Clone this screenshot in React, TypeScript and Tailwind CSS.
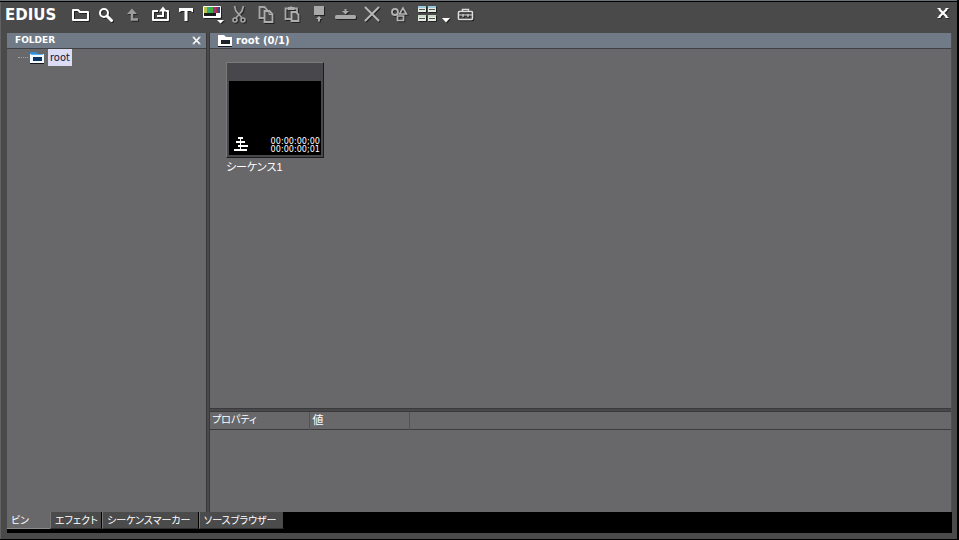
import type { ReactNode } from "react";

const shadow = "drop-shadow-[1px_1px_0px_#222222]";
const jp = "font-['Liberation_Sans','Noto_Sans_CJK_JP',sans-serif] [font-feature-settings:'palt']";

function Icon({ children, w = 26 }: { children: ReactNode; w?: number }) {
  return (
    <svg width={w} height={26} viewBox={`0 0 ${w} 26`} fill="none" className={`block shrink-0 ${shadow}`} aria-hidden="true">
      {children}
    </svg>
  );
}

function Tool({ label, width, children }: { label: string; width: string; children: ReactNode }) {
  return (
    <button type="button" aria-label={label} className={`h-[26px] shrink-0 overflow-visible ${width}`}>
      <Icon>{children}</Icon>
    </button>
  );
}

function CloseIcon({ className }: { className: string }) {
  return (
    <svg viewBox="0 0 12 12" className={`block ${className}`} fill="none" aria-hidden="true">
      <path d="M2 2L10 10M10 2L2 10" stroke="#fff" strokeWidth="2.200" />
      <path d="M0.500 1.500H3.500M8.500 1.500H11.500M0.500 10.500H3.500M8.500 10.500H11.500" stroke="#fff" strokeWidth="1" />
    </svg>
  );
}

function FolderIcon({ glow = false }: { glow?: boolean }) {
  return (
    <svg width="14" height="12" viewBox="0 0 14 12" className="block shrink-0" aria-hidden="true">
      <path d="M0 1H6L8 3H14V12H0Z" fill="#15181c" />
      <path d="M0 0H6L8 2H14V11H0Z" fill={glow ? "#2f8edc" : "#ffffff"} />
      <path d="M0 2H14V11H0Z" fill={glow ? "#f2faff" : "#ffffff"} />
      {glow && <path d="M1 2H13V3H1Z" fill="#5fb0ee" />}
      <path d="M3 5H12V9H3Z" fill={glow ? "#0a3568" : "#20242a"} />
    </svg>
  );
}

function Toolbar() {
  return (
    <header className="flex h-[30px] shrink-0 items-start">
      <h1 className="w-[66px] shrink-0 pl-1 font-['DejaVu_Sans'] text-[15px] leading-[24px] font-bold text-white">EDIUS</h1>
      <Tool label="新規フォルダ" width="w-[26px]">
        <path d="M6 17V7H11L13 9H21V17Z" stroke="#fff" strokeWidth="2" strokeLinejoin="round" />
      </Tool>
      <Tool label="検索" width="w-[26px]">
        <circle cx="11" cy="10" r="4" stroke="#fff" strokeWidth="2" />
        <path d="M14 13L18.500 17.500" stroke="#fff" strokeWidth="3" strokeLinecap="round" />
      </Tool>
      <Tool label="上へ" width="w-[27px]">
        <path d="M8 11L13 5.500L18 11Z" fill="#9c9c9c" />
        <path d="M13 10V16.500H19" stroke="#9c9c9c" strokeWidth="2.500" />
      </Tool>
      <Tool label="ファイルの追加" width="w-[27px]">
        <path d="M12 8H7V17H22V8H20" stroke="#fff" strokeWidth="2" strokeLinejoin="round" />
        <path d="M11 13H17V8" stroke="#fff" strokeWidth="2" />
        <path d="M13 8.500L17 3.500L21 8.500Z" fill="#fff" />
      </Tool>
      <Tool label="タイトルの追加" width="w-[26px]">
        <path d="M6 5H20V9H18.500V8H14.500V18H11.500V8H7.500V9H6Z" fill="#fff" />
      </Tool>
      <Tool label="新規クリップの作成" width="w-[27px]">
        <rect x="4" y="3" width="18" height="12" rx="1" fill="#fff" />
        <rect x="5" y="4" width="3" height="6" fill="#b9c34a" />
        <rect x="8" y="4" width="3" height="6" fill="#30a987" />
        <rect x="11" y="4" width="3" height="6" fill="#42ad38" />
        <rect x="14" y="4" width="3" height="6" fill="#9a368e" />
        <rect x="17" y="4" width="2" height="6" fill="#a63138" />
        <rect x="19" y="4" width="2" height="6" fill="#3c4088" />
        <rect x="5" y="10" width="12" height="3" fill="#1c1c1c" />
        <path d="M18 17H25L21.500 20.500Z" fill="#fff" />
      </Tool>
      <Tool label="切り取り" width="w-[26px]">
        <path d="M8.500 3L10 8L16 15M17.500 3L16 8L10 15" stroke="#a2a2a2" strokeWidth="1.800" />
        <circle cx="9" cy="17" r="2" stroke="#a6a6a6" strokeWidth="1.600" />
        <circle cx="17" cy="17" r="2" stroke="#a6a6a6" strokeWidth="1.600" />
      </Tool>
      <Tool label="コピー" width="w-[27px]">
        <path d="M7.500 4H12.500L15 6.500V15H7.500Z" stroke="#a6a6a6" strokeWidth="1.800" fill="#4a4a4a" />
        <path d="M12.500 8H17.500L20.500 11V19H12.500Z" stroke="#aeaeae" strokeWidth="1.800" fill="#4a4a4a" />
        <path d="M17 8V11.500H20" stroke="#aeaeae" strokeWidth="1" />
      </Tool>
      <Tool label="貼り付け" width="w-[27px]">
        <path d="M6.500 5.500H18V16H6.500Z" stroke="#a6a6a6" strokeWidth="1.800" />
        <path d="M9 4H11L12 3L13 4H15.500V7H9Z" fill="#aeaeae" />
        <path d="M12.500 9H17L19.500 11.500V18H12.500Z" stroke="#aeaeae" strokeWidth="1.800" fill="#4a4a4a" />
      </Tool>
      <Tool label="プレーヤーで表示" width="w-[26px]">
        <rect x="8" y="3" width="10" height="9" fill="#a8a8a8" />
        <path d="M10 16L13 13L16 16H14V18.500H12V16Z" fill="#b0b0b0" />
      </Tool>
      <Tool label="タイムラインへ配置" width="w-[26px]">
        <rect x="3" y="12" width="21" height="4" rx="1.500" fill="#a8a8a8" />
        <path d="M12.500 6H14.500V8H17L13.500 11.500L10 8H12.500Z" fill="#a8a8a8" />
      </Tool>
      <Tool label="削除" width="w-[27px]">
        <path d="M7.500 4.500L20.500 17.500M20.500 4.500L7.500 17.500" stroke="#b8b8b8" strokeWidth="2" strokeLinecap="round" />
      </Tool>
      <Tool label="プロパティ" width="w-[27px]">
        <circle cx="10" cy="9" r="3" stroke="#b4b4b4" strokeWidth="1.800" />
        <path d="M18 5L21.500 11H14.500Z" stroke="#b4b4b4" strokeWidth="1.600" />
        <path d="M12.500 13V17.500H18.500V13Z" stroke="#b4b4b4" strokeWidth="1.700" />
      </Tool>
      <Tool label="表示" width="w-[26px]">
        {[3, 12].map((y) =>
          [6, 16].map((x) => (
            <g key={`${x}-${y}`}>
              <rect x={x} y={y} width="8" height="6" fill="#e2eae4" />
              <rect x={x} y={y} width="8" height="2" fill={y === 3 ? "#9ac9dc" : "#ccdcc8"} />
              <rect x={x + 1} y={y + 3} width="6" height="1" fill="#565348" />
            </g>
          )),
        )}
      </Tool>
      <button type="button" aria-label="表示の切り替え" className="h-[26px] w-4">
        <Icon w={16}>
          <path d="M4 15H12L8 19.500Z" fill="#fff" />
        </Icon>
      </button>
      <Tool label="ツール" width="w-[26px]">
        <path d="M8.500 8.500V6.500H14.500V8.500" stroke="#ddd" strokeWidth="1.500" />
        <rect x="4.500" y="8.500" width="14" height="8" rx="1" stroke="#ddd" strokeWidth="1.600" />
        <path d="M5 12H18M9 11V14M14 11V14" stroke="#d5d5d5" strokeWidth="1.200" />
      </Tool>
      <button type="button" aria-label="閉じる" className="mt-1 mr-[8px] ml-auto">
        <CloseIcon className={`h-[12px] w-[12px] ${shadow}`} />
      </button>
    </header>
  );
}

function PanelHeader({ children }: { children: ReactNode }) {
  return (
    <div className="flex h-4 shrink-0 items-center border-b border-[#3f4145] bg-[#717b87] font-['DejaVu_Sans'] font-bold text-white">
      {children}
    </div>
  );
}

function FolderPanel() {
  return (
    <aside className="flex w-[199px] shrink-0 flex-col bg-[#68686a]">
      <PanelHeader>
        <h2 className="pl-2 text-[9px]">FOLDER</h2>
        <button type="button" aria-label="フォルダを閉じる" className="mr-[5px] ml-auto">
          <CloseIcon className="h-[9px] w-[9px]" />
        </button>
      </PanelHeader>
      <ul>
        <li className="flex h-[17px] items-center pl-[11px]">
          <span className="mr-[2px] w-[10px] border-t border-dotted border-[#a0a0a0]" />
          <FolderIcon glow />
          <a href="#root" className="ml-1 bg-[#dcdcf4] px-[2px] font-['DejaVu_Sans_Condensed'] text-[11px] leading-[17px] text-[#101030]">
            root
          </a>
        </li>
      </ul>
    </aside>
  );
}

function Clip() {
  return (
    <figure className="w-[98px]">
      <div className="border border-t-[#7b7b7b] border-r-[#1c1c1e] border-b-[#1c1c1e] border-l-[#7b7b7b] bg-[#48484c] px-[2px] pt-[18px] pb-[2px]">
        <div className="flex h-[74px] items-end justify-between bg-black pb-[2px] pl-[5px]">
          <svg width="14" height="15" viewBox="0 0 14 15" className="mb-px" aria-hidden="true">
            <path d="M4 1H9M2 5H11M4 9H14M0 13H13" stroke="#fff" strokeWidth="2" />
            <path d="M6.500 1V13" stroke="#fff" strokeWidth="1" />
          </svg>
          <div className="pr-px font-['DejaVu_Sans_Condensed'] text-[9px] leading-[8px] text-white">
            <div>00:00:00;00</div>
            <div>00:00:00;01</div>
          </div>
        </div>
      </div>
      <figcaption className={`mt-px text-[11px] leading-[17px] text-white ${jp}`}>シーケンス1</figcaption>
    </figure>
  );
}

function Properties() {
  return (
    <section className="h-[101px] shrink-0 border-t border-[#3a3a3c] bg-[#68686a]">
      <table className={`w-full table-fixed text-left text-white ${jp}`}>
        <thead>
          <tr className="h-[17px] border-b border-[#3c3c3e] leading-4">
            <th className="w-[99px] border-r border-[#525254] p-0 pl-[2px] text-[10px] font-normal">プロパティ</th>
            <th className="w-[100px] border-r border-[#525254] p-0 pl-[3px] text-[11px] font-normal">値</th>
            <th className="p-0" />
          </tr>
        </thead>
      </table>
    </section>
  );
}

const tabs = [
  { name: "ビン", width: "w-[43px]" },
  { name: "エフェクト", width: "w-[52px]" },
  { name: "シーケンスマーカー", width: "w-[97px]" },
  { name: "ソースブラウザー", width: "w-[85px]" },
];

function Tabs() {
  return (
    <nav className="flex h-[21px] shrink-0 items-start bg-black" role="tablist">
      {tabs.map((t, i) => (
        <button
          key={t.name}
          type="button"
          role="tab"
          aria-selected={i === 0}
          className={`h-[17px] shrink-0 border-b pt-[2px] text-left text-[10px] leading-[14px] whitespace-nowrap text-white ${jp} ${t.width} ${
            i === 0 ? "border-[#8a8a8a] bg-[#68686a] pl-1" : "border-r border-b-[#303030] border-r-black border-l border-l-[#777777] bg-[#4b4b4b] pl-1"
          }`}
        >
          {t.name}
        </button>
      ))}
    </nav>
  );
}

export default function App() {
  return (
    <div className="flex h-screen flex-col border-r-2 border-b border-black bg-[#4a4a4a]">
      <div className="h-[2px] shrink-0 border-b border-black bg-[#687078]" />
      <div className="flex min-h-0 grow flex-col border-l border-[#626262] pt-px pb-[6px]">
        <Toolbar />
        <div className="flex min-h-0 grow flex-col pr-[5px] pl-[6px]">
          <div className="flex min-h-0 grow">
            <FolderPanel />
            <div className="w-[4px] shrink-0 border-x border-[#38383a] bg-[#4a4a4c]" />
            <main className="flex min-w-0 grow flex-col border-r border-[#505052]">
              <section className="flex min-h-0 grow flex-col border-b border-[#3a3a3c] bg-[#68686a]">
                <PanelHeader>
                  <div className="flex items-center gap-1 pl-2">
                    <FolderIcon />
                    <h2 className="text-[10px]">root (0/1)</h2>
                  </div>
                </PanelHeader>
                <div className="pt-[13px] pl-4">
                  <Clip />
                </div>
              </section>
              <div className="h-[2px] shrink-0 bg-[#48484a]" />
              <Properties />
            </main>
          </div>
          <Tabs />
        </div>
      </div>
    </div>
  );
}
